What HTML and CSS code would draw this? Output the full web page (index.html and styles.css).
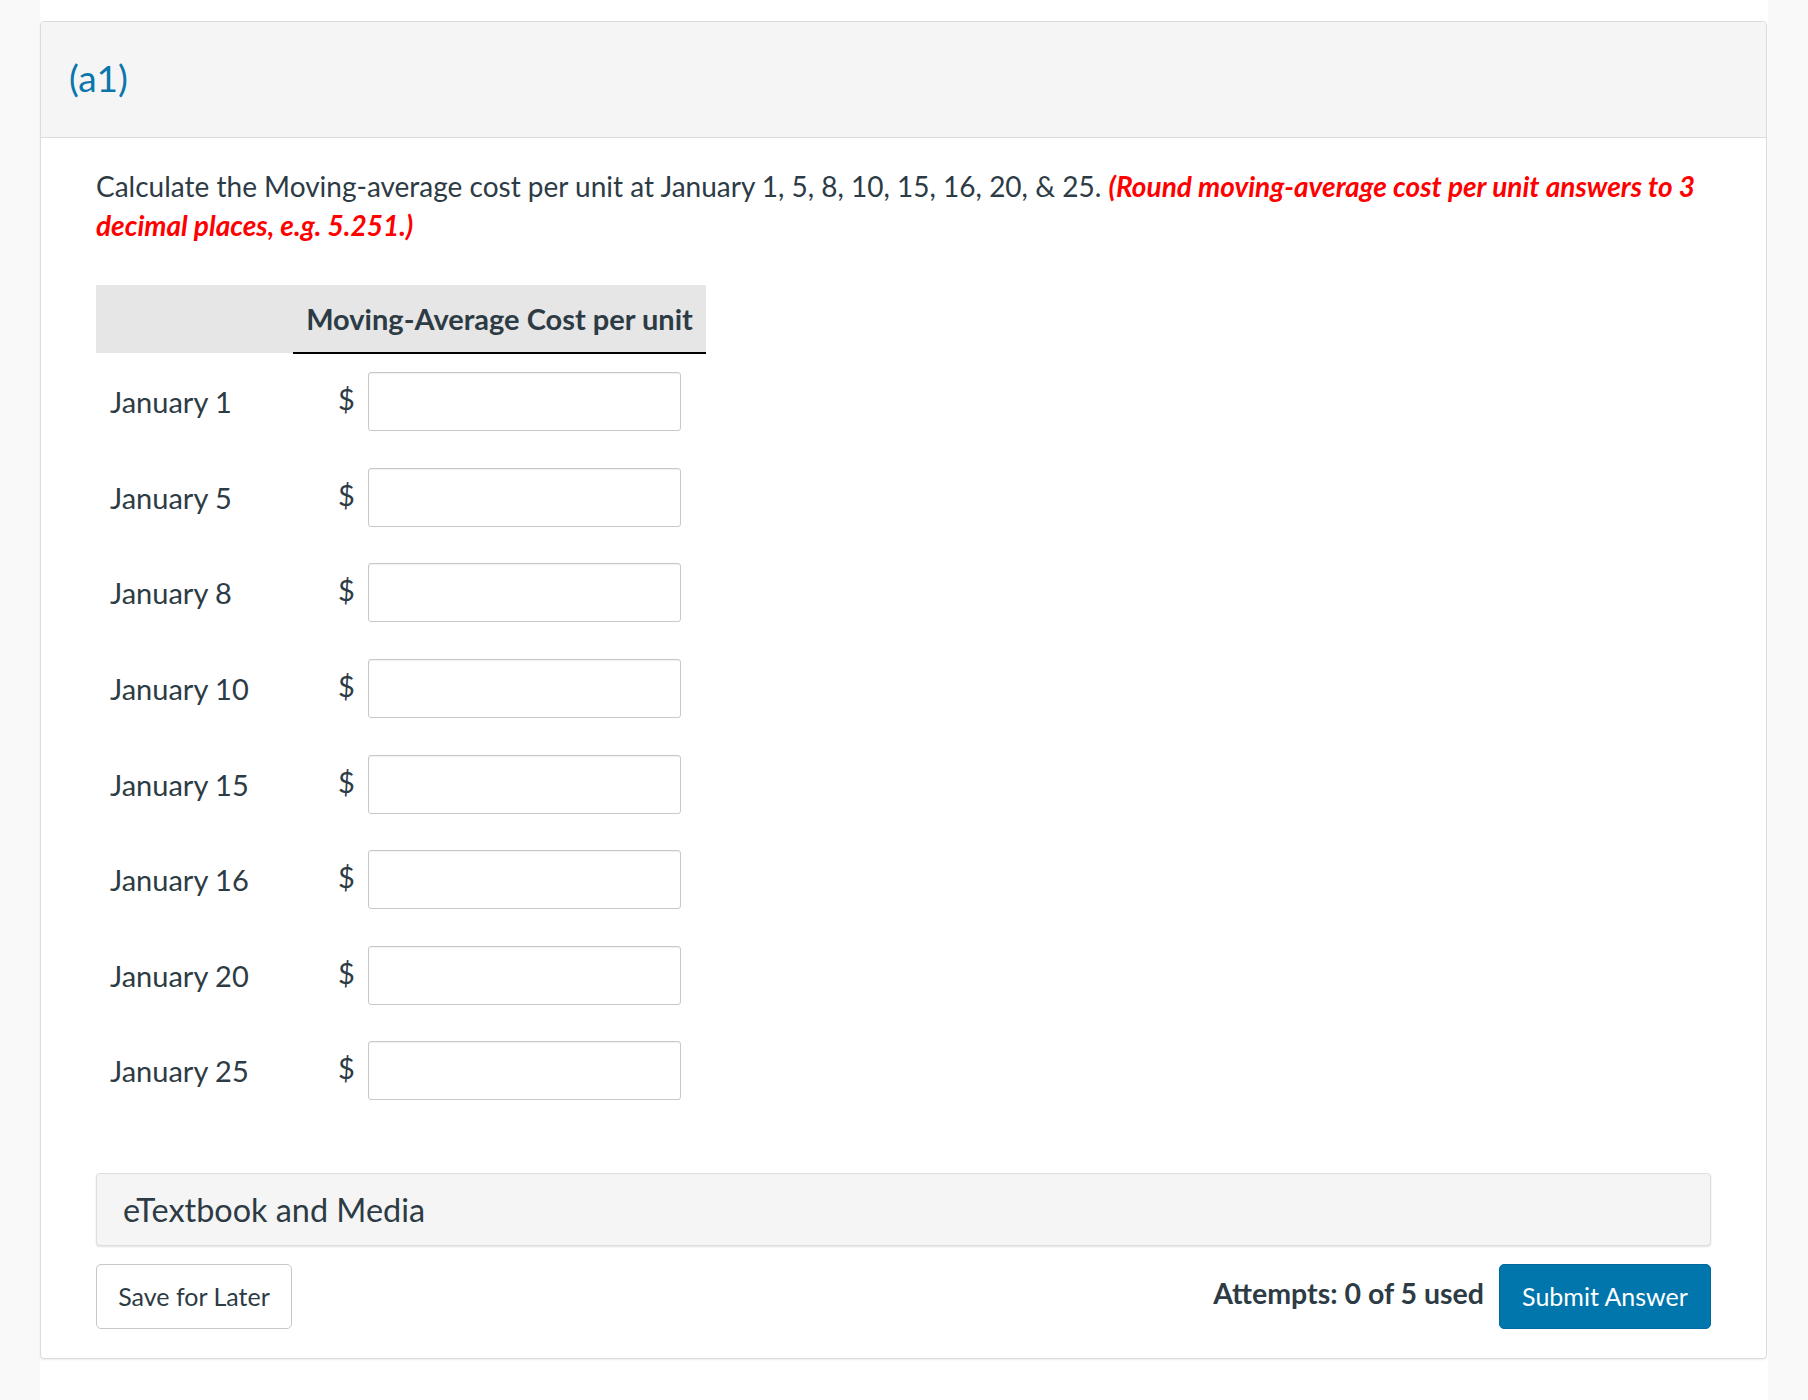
FILE: index.html
```html
<!DOCTYPE html>
<html lang="en">
<head>
<meta charset="utf-8">
<title>(a1)</title>
<link rel="stylesheet" href="styles.css">
</head>
<body>
<div class="page">
  <div class="card">
    <div class="card-head"><span class="part">(a1)</span></div>
    <div class="card-body">
      <p class="question"><span class="lead">Calculate the Moving-average cost per unit at January 1, 5, 8, 10, 15, 16, 20, &amp; 25.</span> <em class="hint">(Round moving-average cost per unit answers to 3 decimal places, e.g. 5.251.)</em></p>
      <table class="grid">
        <thead>
          <tr><th class="blank"></th><th class="colhead">Moving-Average Cost per unit</th></tr>
        </thead>
        <tbody>
          <tr><td class="label">January 1</td><td><div class="cell"><span class="cur">$</span><input class="field" type="text"></div></td></tr>
          <tr><td class="label">January 5</td><td><div class="cell"><span class="cur">$</span><input class="field" type="text"></div></td></tr>
          <tr><td class="label">January 8</td><td><div class="cell"><span class="cur">$</span><input class="field" type="text"></div></td></tr>
          <tr><td class="label">January 10</td><td><div class="cell"><span class="cur">$</span><input class="field" type="text"></div></td></tr>
          <tr><td class="label">January 15</td><td><div class="cell"><span class="cur">$</span><input class="field" type="text"></div></td></tr>
          <tr><td class="label">January 16</td><td><div class="cell"><span class="cur">$</span><input class="field" type="text"></div></td></tr>
          <tr><td class="label">January 20</td><td><div class="cell"><span class="cur">$</span><input class="field" type="text"></div></td></tr>
          <tr><td class="label">January 25</td><td><div class="cell"><span class="cur">$</span><input class="field" type="text"></div></td></tr>
        </tbody>
      </table>
      <div class="media">eTextbook and Media</div>
      <div class="actions">
        <button class="btn btn-save" type="button">Save for Later</button>
        <div class="submit-group">
          <span class="attempts">Attempts: 0 of 5 used</span>
          <button class="btn btn-submit" type="button">Submit Answer</button>
        </div>
      </div>
    </div>
  </div>
</div>
</body>
</html>
```
FILE: styles.css
```css
html, body {
  margin: 0;
  padding: 0;
}
body {
  background: #f9f9f9;
  font-family: Lato, "Noto Sans", sans-serif;
  color: #2d3b45;
}
.page {
  margin: 0 40px 0 40px;
  background: #ffffff;
  padding: 21px 1px 42px 0;
  min-height: 1337px;
}
.card {
  border: 1px solid #dcdcdc;
  border-radius: 4px;
  box-shadow: 0 1px 2px rgba(0,0,0,0.08);
  background: #fff;
  overflow: hidden;
}
.card-head {
  background: #f5f5f5;
  border-bottom: 1px solid #dcdcdc;
  height: 115px;
  display: flex;
  align-items: center;
  padding-left: 28px;
}
.part {
  color: #0a76ac;
  font-size: 37px;
  position: relative;
  top: -2px;
}
.card-body {
  padding: 29px 55px 29px 55px;
}
.question {
  margin: 0;
  font-size: 28px;
  line-height: 39px;
}
.hint {
  color: #ff0000;
  font-weight: 700;
  font-style: italic;
}
.grid {
  margin-top: 40px;
  border-collapse: collapse;
  table-layout: fixed;
  width: 610px;
}
.grid th {
  background: #e6e6e6;
  height: 67px;
  padding: 0;
  font-size: 29px;
  font-weight: 700;
  color: #2d3b45;
}
.grid th.blank {
  width: 197px;
}
.grid th.colhead {
  border-bottom: 2px solid #000;
  text-align: center;
  padding-top: 0;
}
.grid td {
  height: 95.6px;
  padding: 0;
  font-size: 29px;
}
.grid td.label {
  padding-left: 14px;
}
.cell {
  display: flex;
  align-items: center;
  height: 95.6px;
  padding-left: 45px;
  gap: 14px;
}
.cur {
  font-size: 29px;
  position: relative;
  top: -3px;
  width: 16px;
}
.field {
  width: 313px;
  height: 59px;
  box-sizing: border-box;
  border: 1px solid #c8c8c8;
  border-radius: 3px;
  box-shadow: inset 0 1px 1px rgba(0,0,0,0.06);
  font-family: Lato, sans-serif;
  font-size: 24px;
  padding: 0 10px;
  margin: 0;
}
.media {
  margin-top: 54px;
  background: #f5f5f5;
  border: 1px solid #dedede;
  border-radius: 4px;
  box-shadow: 0 1px 2px rgba(0,0,0,0.12);
  height: 71px;
  display: flex;
  align-items: center;
  padding-left: 26px;
  font-size: 32.4px;
  color: #2d3b45;
}
.actions {
  margin-top: 18px;
  display: flex;
  justify-content: space-between;
  align-items: center;
}
.btn {
  font-family: Lato, sans-serif;
  font-size: 25px;
  height: 65px;
  border-radius: 5px;
  cursor: pointer;
  margin: 0;
}
.btn-save {
  width: 196px;
  background: #fff;
  border: 1px solid #c7c7c7;
  color: #2d3b45;
}
.submit-group {
  display: flex;
  align-items: center;
  gap: 15px;
}
.attempts {
  font-size: 28.5px;
  font-weight: 700;
  color: #2d3b45;
  position: relative;
  top: -3px;
}
.btn-submit {
  width: 212px;
  background: #0076ad;
  border: 1px solid #006a9c;
  color: #fff;
}
```
